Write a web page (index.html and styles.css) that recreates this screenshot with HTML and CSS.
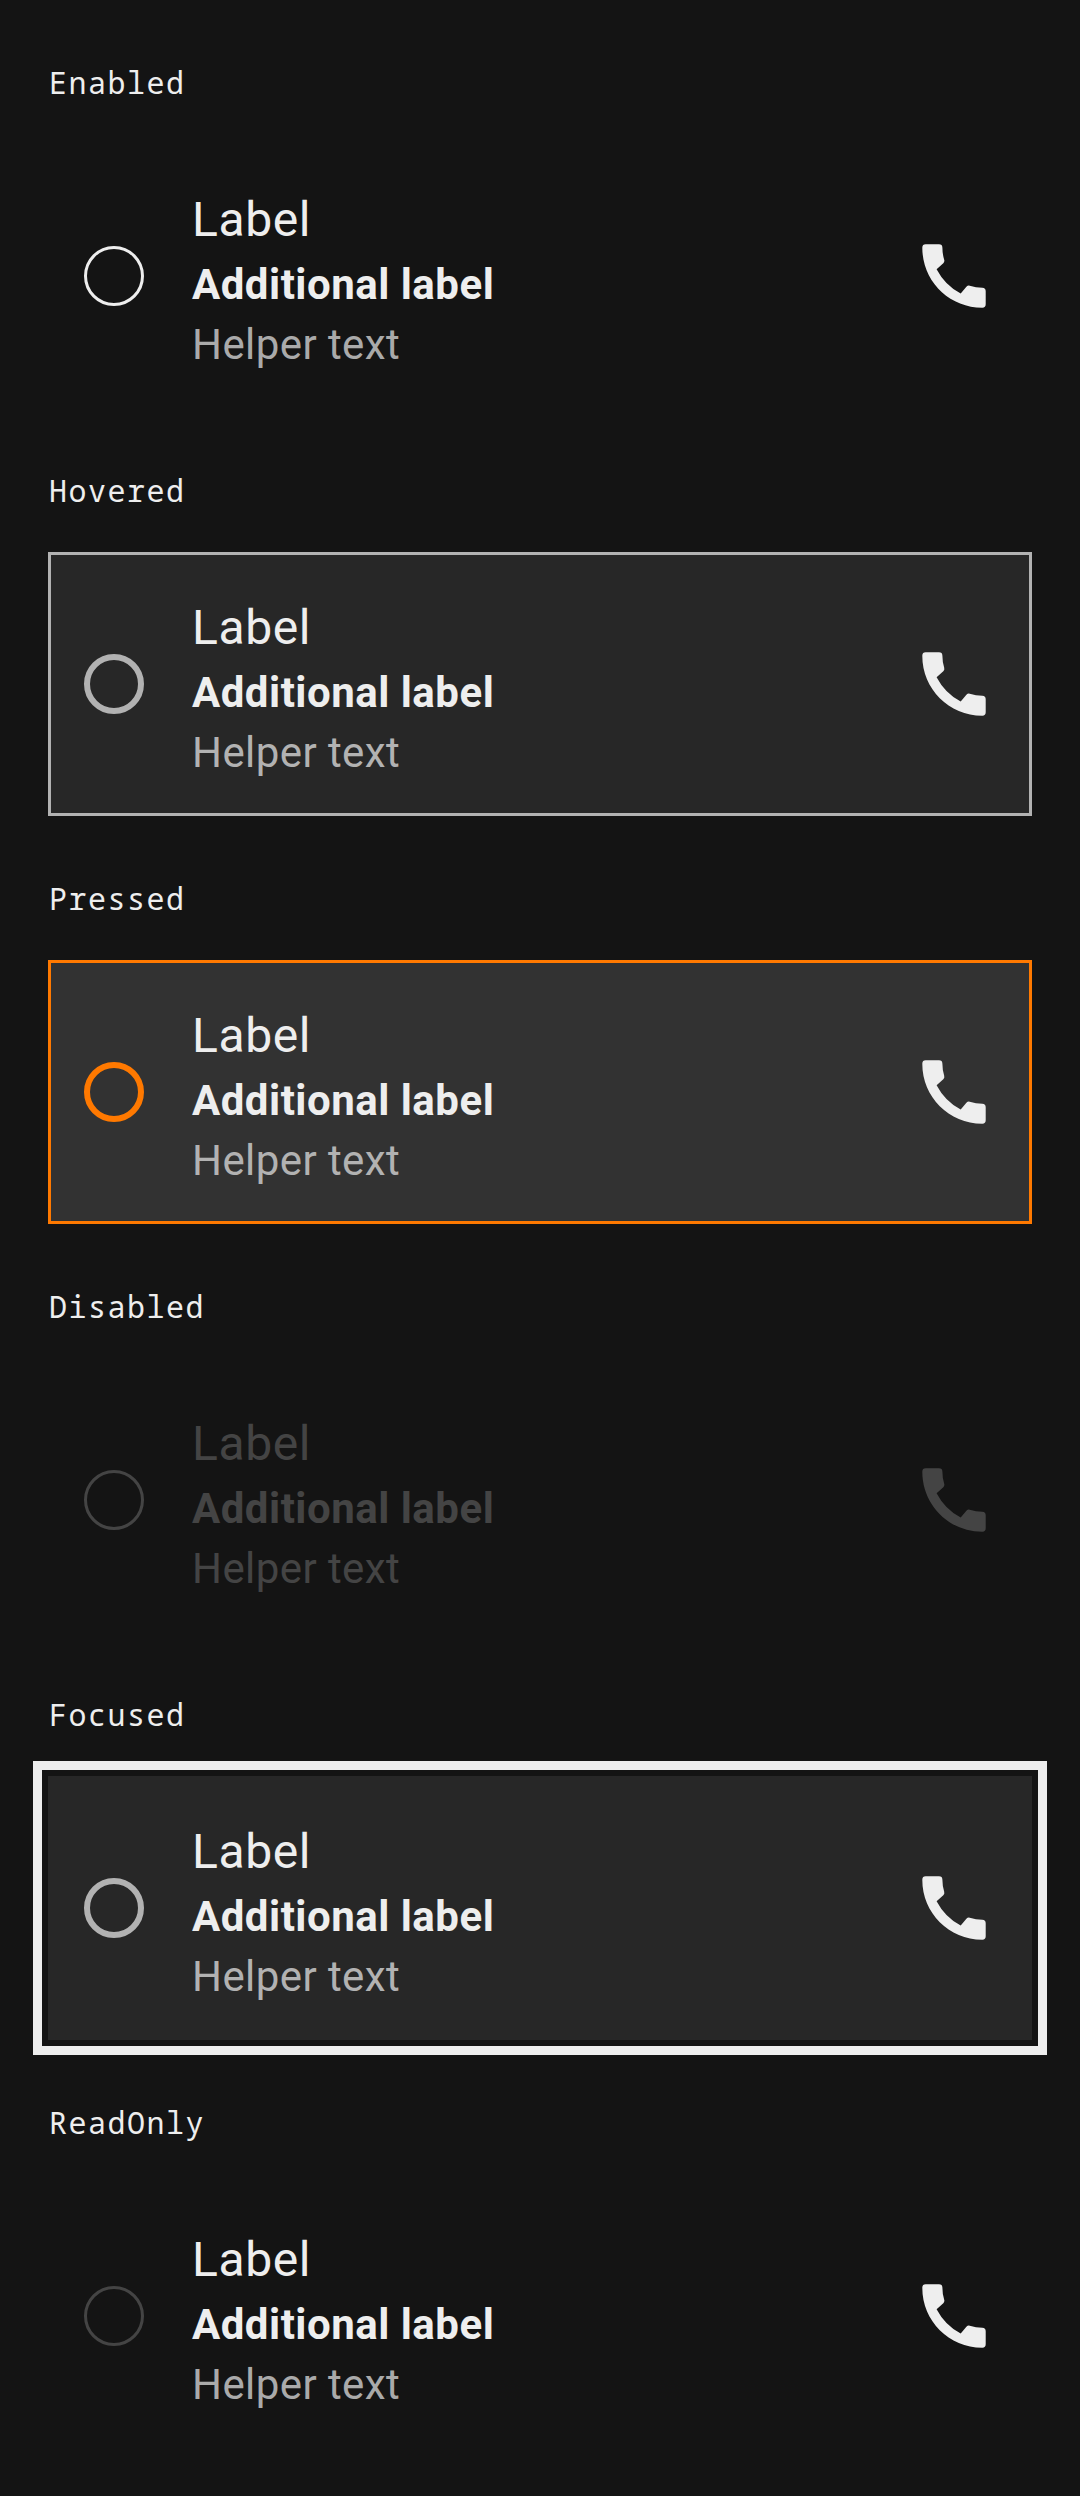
FILE: index.html
```html
<!DOCTYPE html>
<html lang="en">
<head>
<meta charset="utf-8">
<title>Radio button states</title>
<link rel="stylesheet" href="styles.css">
</head>
<body>
<svg class="defs" width="0" height="0"><symbol id="phone" viewBox="0 0 64 64"><path d="M3.7.3H17Q20.4.3 20.4 3.7Q20.4 10 22.2 15.7Q22.8 17.7 21.3 19.2L14.6 25.2Q23 41.3 38.7 49.5L44.4 42.8Q45.8 41.3 47.7 41.7Q54 43.6 60.3 43.7Q63.7 43.9 63.7 47.2V60.3Q63.7 63.7 60.3 63.7C27 63.7.3 37 .3 3.7Q.3.3 3.7.3Z"/></symbol></svg>
<main class="states">
<section class="state enabled"><h2 class="name">Enabled</h2><div class="item"><span class="radio"></span><div class="texts"><p class="label">Label</p><p class="additional">Additional label</p><p class="helper">Helper text</p></div><svg class="icon"><use href="#phone"/></svg></div></section>
<section class="state hovered"><h2 class="name">Hovered</h2><div class="item"><span class="radio"></span><div class="texts"><p class="label">Label</p><p class="additional">Additional label</p><p class="helper">Helper text</p></div><svg class="icon"><use href="#phone"/></svg></div></section>
<section class="state pressed"><h2 class="name">Pressed</h2><div class="item"><span class="radio"></span><div class="texts"><p class="label">Label</p><p class="additional">Additional label</p><p class="helper">Helper text</p></div><svg class="icon"><use href="#phone"/></svg></div></section>
<section class="state disabled"><h2 class="name">Disabled</h2><div class="item"><span class="radio"></span><div class="texts"><p class="label">Label</p><p class="additional">Additional label</p><p class="helper">Helper text</p></div><svg class="icon"><use href="#phone"/></svg></div></section>
<section class="state focused"><h2 class="name">Focused</h2><div class="item"><span class="radio"></span><div class="texts"><p class="label">Label</p><p class="additional">Additional label</p><p class="helper">Helper text</p></div><svg class="icon"><use href="#phone"/></svg></div></section>
<section class="state readonly"><h2 class="name">ReadOnly</h2><div class="item"><span class="radio"></span><div class="texts"><p class="label">Label</p><p class="additional">Additional label</p><p class="helper">Helper text</p></div><svg class="icon"><use href="#phone"/></svg></div></section>
</main>
</body>
</html>
```
FILE: styles.css
```css
* { box-sizing: border-box; margin: 0; }
body { background: #141414; color: #eee; font-family: Roboto, sans-serif; }
.defs { display: block; }
.states { padding: 60px 48px 0; height: 2496px; overflow: hidden; }
.state { height: 408px; }
.name { height: 84px; padding: 2px 0 0 1px; font: 400 30px/42px "Droid Sans Mono", "Noto Sans Mono", "DejaVu Sans Mono", monospace; letter-spacing: 1.5px; }
.item { display: flex; align-items: center; height: 264px; padding: 0 33px; border: 3px solid transparent; }
.radio { width: 60px; height: 60px; border: 3px solid #eee; border-radius: 50%; margin-right: 48px; }
.texts { flex: 1; padding-top: 8px; }
.label { font-size: 48px; line-height: 70px; letter-spacing: .6px; }
.additional { font-size: 42px; line-height: 60px; font-weight: 700; letter-spacing: .5px; }
.helper { font-size: 42px; line-height: 60px; color: #aaa; letter-spacing: .42px; }
.icon { width: 64px; height: 64px; margin-right: 10px; fill: #eee; }
.hovered .item { background: #272727; border-color: #b2b2b2; }
.hovered .radio, .focused .radio { border: 6px solid #b2b2b2; }
.hovered .helper, .pressed .helper, .focused .helper { color: #b2b2b2; }
.pressed .item { background: #323232; border-color: #ff7900; }
.pressed .radio { border: 6px solid #ff7900; }
.disabled .label, .disabled .additional, .disabled .helper { color: #444; }
.disabled .icon { fill: #444; }
.disabled .radio, .readonly .radio { border-color: #444; }
.focused .item { background: #272727; border-color: #272727; box-shadow: 0 0 0 6px #141414, 0 0 0 15px #eee; }
```
